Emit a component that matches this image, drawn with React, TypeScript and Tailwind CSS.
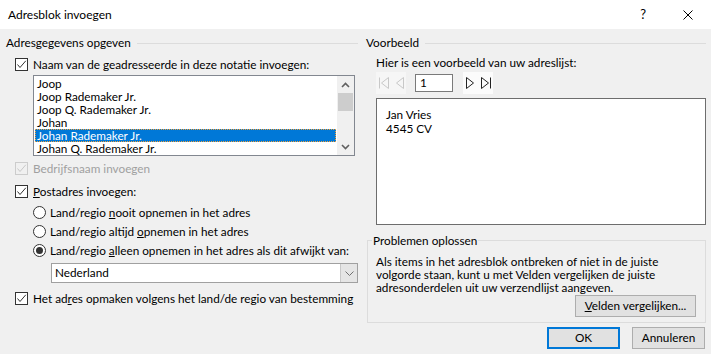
import React from 'react';

// Windows dialog "Adresblok invoegen"

const names = [
  'Joop',
  'Joop Rademaker Jr.',
  'Joop Q. Rademaker Jr.',
  'Johan',
  'Johan Rademaker Jr.',
  'Johan Q. Rademaker Jr.',
];

function CheckBox({ disabled }: { disabled?: boolean }) {
  return (
    <span
      className={
        disabled
          ? 'flex h-[13px] w-[13px] shrink-0 items-center justify-center border border-[#cccccc]'
          : 'flex h-[13px] w-[13px] shrink-0 items-center justify-center border border-[#333333] bg-white'
      }
    >
      <svg width="11" height="11" viewBox="0 0 11 11">
        <path d="M1.5 5.5 L4 8.5 L9.8 1.8" fill="none" stroke={disabled ? '#c8c8c8' : '#333333'} strokeWidth="1" />
      </svg>
    </span>
  );
}

function Radio({ checked }: { checked?: boolean }) {
  return (
    <span className="flex h-[13px] w-[13px] shrink-0 items-center justify-center rounded-full border border-[#333333] bg-white">
      {checked && <span className="h-[7px] w-[7px] rounded-full bg-[#333333]" />}
    </span>
  );
}

function GroupHeader({ label }: { label: string }) {
  return (
    <div className="flex h-[14px] items-center gap-[6px] leading-[14px]">
      <span>{label}</span>
      <span className="h-px flex-1 bg-[#dcdcdc]" />
    </div>
  );
}

function Chevron({ up }: { up?: boolean }) {
  return (
    <svg width="9" height="6" viewBox="0 0 9 6">
      <path d={up ? 'M1 5 L4.5 1.5 L8 5' : 'M1 1 L4.5 4.5 L8 1'} fill="none" stroke="#606060" strokeWidth="1.6" />
    </svg>
  );
}

export default function App() {
  return (
    <div className="h-[354px] w-[711px] overflow-hidden whitespace-nowrap bg-[#f0f0f0] font-['Lato',sans-serif] text-[11.75px] text-black">
      {/* Title bar */}
      <div className="flex h-[29px] items-center bg-white">
        <span className="pl-[8px] text-[12px]">Adresblok invoegen</span>
        <span className="ml-auto mr-[37px] text-[13px]">?</span>
        <svg width="10" height="10" viewBox="0 0 10 10" className="mr-[18px]">
          <path d="M0.5 0.5 L9.5 9.5 M9.5 0.5 L0.5 9.5" stroke="#000" strokeWidth="1" />
        </svg>
      </div>

      <div className="flex">
        {/* Left column */}
        <div className="flex w-[361px] flex-col pl-[6px] pr-[3px] pt-[7px]">
          <GroupHeader label="Adresgegevens opgeven" />

          <div className="ml-[9px] mt-[7px] flex h-[15px] items-center gap-[5px]">
            <CheckBox />
            <span>
              Naam van de <u>g</u>eadresseerde in deze notatie invoegen:
            </span>
          </div>

          {/* Listbox */}
          <div className="ml-[27px] mt-[3px] flex h-[81px] w-[322px] border border-[#828790] bg-white">
            <div className="flex-1 px-[1px] pt-[1px]">
              {names.map((n, i) => (
                <div
                  key={n}
                  className={
                    i === 4
                      ? 'h-[13px] pl-[2px] leading-[13px] bg-[#0078d7] text-white outline-1 outline-dotted outline-[#f4a23a] -outline-offset-1'
                      : 'h-[13px] pl-[2px] leading-[13px]'
                  }
                >
                  {n}
                </div>
              ))}
            </div>
            <div className="flex w-[17px] flex-col bg-[#f0f0f0]">
              <div className="flex h-[17px] items-center justify-center">
                <Chevron up />
              </div>
              <div className="mx-[1px] h-[18px] bg-[#cdcdcd]" />
              <div className="flex-1" />
              <div className="flex h-[17px] items-center justify-center">
                <Chevron />
              </div>
            </div>
          </div>

          <div className="ml-[9px] mt-[5px] flex h-[15px] items-center gap-[5px] text-[#a0a0a0]">
            <CheckBox disabled />
            <span>Bedrijfsnaam invoegen</span>
          </div>

          <div className="ml-[9px] mt-[8px] flex h-[15px] items-center gap-[5px]">
            <CheckBox />
            <span>
              <u>P</u>ostadres invoegen:
            </span>
          </div>

          <div className="ml-[27px] mt-[6px] flex h-[15px] items-center gap-[4px]">
            <Radio />
            <span>
              Land/regio <u>n</u>ooit opnemen in het adres
            </span>
          </div>
          <div className="ml-[27px] mt-[4px] flex h-[15px] items-center gap-[4px]">
            <Radio />
            <span>
              Land/regio altijd <u>o</u>pnemen in het adres
            </span>
          </div>
          <div className="ml-[27px] mt-[4px] flex h-[15px] items-center gap-[4px]">
            <Radio checked />
            <span>
              Land/regio <u>a</u>lleen opnemen in het adres als dit afwijkt van:
            </span>
          </div>

          {/* Combobox */}
          <div className="ml-[45px] mt-[5px] flex h-[20px] w-[307px] border border-[#a0a0a0] bg-white">
            <span className="flex-1 pl-[3px] leading-[18px]">Nederland</span>
            <span className="flex w-[17px] items-center justify-center border-l border-[#c8c8c8] bg-[#e5e5e5]">
              <svg width="9" height="5" viewBox="0 0 9 5">
                <path d="M0.5 0.5 L4.5 4.5 L8.5 0.5" fill="none" stroke="#707070" strokeWidth="1" />
              </svg>
            </span>
          </div>

          <div className="ml-[9px] mt-[8px] flex h-[15px] items-center gap-[5px]">
            <CheckBox />
            <span>
              Het ad<u>r</u>es opmaken volgens het land/de regio van bestemming
            </span>
          </div>
        </div>

        {/* Right column */}
        <div className="flex w-[350px] flex-col pt-[7px]">
          <div className="ml-[5px] mr-[5px]">
            <GroupHeader label="Voorbeeld" />
          </div>

          <div className="ml-[15px] mt-[5px] h-[15px] leading-[15px]">Hier is een voorbeeld van uw adreslijst:</div>

          {/* Record navigation */}
          <div className="ml-[15px] mt-[2px] flex h-[22px] items-center">
            <div className="flex h-full w-[30px] items-center justify-center gap-[7px] bg-[#f6f6f6]">
              <svg width="10" height="12" viewBox="0 0 10 12">
                <path d="M0.5 0.5 V11.5 M9.5 0.5 L2.5 6 L9.5 11.5 Z" fill="none" stroke="#c8c8c8" strokeWidth="1" />
              </svg>
              <svg width="8" height="12" viewBox="0 0 8 12">
                <path d="M7.5 0.5 L0.5 6 L7.5 11.5 Z" fill="none" stroke="#c8c8c8" strokeWidth="1" />
              </svg>
            </div>
            <div className="ml-[9px] flex h-[18px] w-[38px] items-center border border-[#7a7a7a] bg-white pl-[4px]">1</div>
            <div className="ml-[10px] flex h-full w-[30px] items-center justify-center gap-[7px] bg-[#fbfbfb]">
              <svg width="8" height="12" viewBox="0 0 8 12">
                <path d="M0.5 0.5 L7.5 6 L0.5 11.5 Z" fill="none" stroke="#222" strokeWidth="1" />
              </svg>
              <svg width="10" height="12" viewBox="0 0 10 12">
                <path d="M0.5 0.5 L7.5 6 L0.5 11.5 Z M9.5 0.5 V11.5" fill="none" stroke="#222" strokeWidth="1" />
              </svg>
            </div>
          </div>

          {/* Preview */}
          <div className="ml-[15px] mt-[4px] h-[127px] w-[330px] border border-[#6d6d6d] bg-white pl-[9px] pt-[9px] leading-[14px]">
            <div>Jan Vries</div>
            <div>4545 CV</div>
          </div>

          {/* Problemen oplossen */}
          <div className="ml-[6px] mt-[15px] flex h-[83px] w-[339px] flex-col border border-[#dcdcdc]">
            <div className="-mt-[8px] ml-[4px] w-fit bg-[#f0f0f0] px-[1px] leading-[15px]">Problemen oplossen</div>
            <div className="mt-[7px] pl-[8px] leading-[13px]">
              Als items in het adresblok ontbreken of niet in de juiste
              <br />
              volgorde staan, kunt u met Velden vergelijken de juiste
              <br />
              adresonderdelen uit uw verzendlijst aangeven.
            </div>
            <div className="mr-[9px] mt-[1px] flex h-[22px] w-[121px] items-center justify-center self-end border border-[#adadad] bg-[#e1e1e1]">
              <span>
                <u>V</u>elden vergelijken...
              </span>
            </div>
          </div>

          <div className="mr-[6px] mt-[4px] flex justify-end gap-[12px]">
            <div className="flex h-[22px] w-[73px] items-center justify-center border-2 border-[#0078d7] bg-[#e1e1e1]">OK</div>
            <div className="flex h-[22px] w-[73px] items-center justify-center border border-[#adadad] bg-[#e1e1e1]">Annuleren</div>
          </div>
        </div>
      </div>
    </div>
  );
}
